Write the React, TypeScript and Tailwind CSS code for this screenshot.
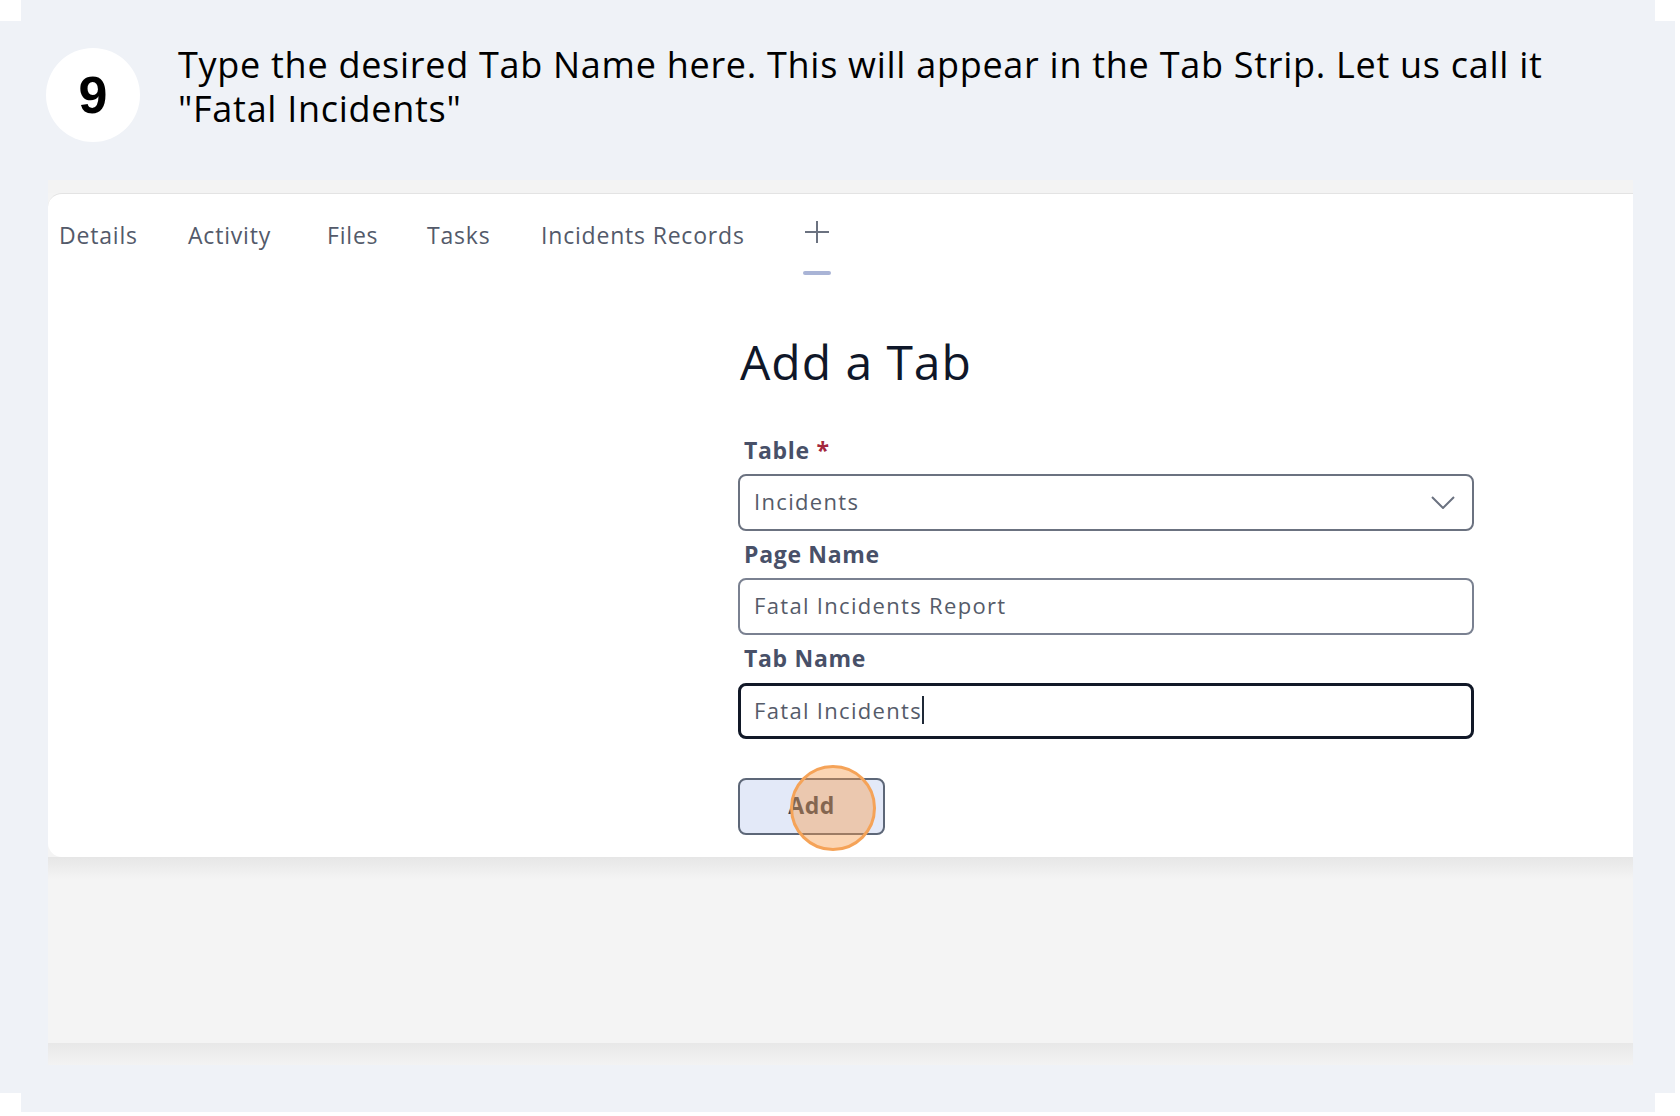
import React from "react";

const ui = { fontFamily: '"Open Sans", "Noto Sans", sans-serif' };

function Tab({ label, w }: { label: string; w: string }) {
  return (
    <div className={`${w} pt-[26px] text-[23px] leading-[31px] text-[#535a6a] tracking-[0.035em]`}>{label}</div>
  );
}

export default function App() {
  return (
    <div className="w-[1680px] h-[1116px] bg-white overflow-hidden" style={ui}>
      <div className="w-[1675px] h-[1112px] bg-[#eff2f7] flex flex-col [clip-path:polygon(21px_0,1655px_0,1655px_21px,1675px_21px,1675px_1093px,1655px_1093px,1655px_1112px,21px_1112px,21px_1093px,0_1093px,0_21px,21px_21px)]">
        {/* header */}
        <div className="flex items-start pt-[43px] pl-[46px] h-[180px]">
          <div className="mt-[5px] w-[94px] h-[94px] rounded-full bg-white flex items-center justify-center shrink-0">
            <span className="text-[52px] leading-none font-black text-black" style={{ fontFamily: '"Liberation Sans", Arial, sans-serif' }}>9</span>
          </div>
          <div className="ml-[38px] w-[1400px] text-[36px] leading-[44px] text-black tracking-[0.02em]">
            Type the desired Tab Name here. This will appear in the Tab Strip. Let us call it "Fatal Incidents"
          </div>
        </div>

        {/* screenshot */}
        <div className="ml-[48px] w-[1585px] h-[885px] bg-[#f4f4f4] flex flex-col">
          <div className="h-[13px] bg-[#f3f3f3]" />
          <div className="h-[664px] bg-white rounded-tl-[14px] rounded-bl-[14px] border-t border-[#e3e3e3] flex flex-col">
            {/* tabs */}
            <div className="flex items-start pl-[11px] h-[86px]">
              <Tab label="Details" w="w-[129px]" />
              <Tab label="Activity" w="w-[139px]" />
              <Tab label="Files" w="w-[100px]" />
              <Tab label="Tasks" w="w-[114px]" />
              <Tab label="Incidents Records" w="w-[262px]" />
              <div className="w-[28px] flex flex-col items-center">
                <svg className="mt-[27px]" width="24" height="22" viewBox="0 0 24 22">
                  <line x1="12" y1="0" x2="12" y2="22" stroke="#6b7280" strokeWidth="2" />
                  <line x1="0" y1="11" x2="24" y2="11" stroke="#6b7280" strokeWidth="2" />
                </svg>
                <div className="mt-[28px] w-[28px] h-[4px] bg-[#a9b4d6] rounded-full" />
              </div>
            </div>

            {/* form */}
            <div className="ml-[690px] w-[736px] flex flex-col">
              <h1 className="mt-[58px] ml-[2px] text-[48px] leading-[47px] font-normal text-[#0f1729] tracking-[0.02em]">Add a Tab</h1>

              <div className="mt-[51px] ml-[6px] text-[23px] leading-[28px] font-bold text-[#485068] tracking-[0.03em]">
                Table <span className="text-[#a3283d]">*</span>
              </div>
              <div className="mt-[10px] h-[57px] rounded-[8px] border-2 border-[#6b7280] flex items-center justify-between pl-[14px] pr-[17px]">
                <span className="text-[22px] leading-[30px] -mt-[3px] text-[#555b69] tracking-[0.06em]">Incidents</span>
                <svg width="24" height="13" viewBox="0 0 24 13">
                  <polyline points="1,1 12,12 23,1" fill="none" stroke="#6b7280" strokeWidth="2" />
                </svg>
              </div>

              <div className="mt-[9px] ml-[6px] text-[23px] leading-[28px] font-bold text-[#485068] tracking-[0.03em]">Page Name</div>
              <div className="mt-[10px] h-[57px] rounded-[8px] border-2 border-[#7a8191] flex items-center pl-[14px]">
                <span className="text-[22px] leading-[30px] -mt-[3px] text-[#555b69] tracking-[0.06em]">Fatal Incidents Report</span>
              </div>

              <div className="mt-[9px] ml-[6px] text-[23px] leading-[28px] font-bold text-[#485068] tracking-[0.03em]">Tab Name</div>
              <div className="mt-[11px] h-[56px] rounded-[8px] border-[3px] border-[#111827] flex items-center pl-[13px]">
                <span className="text-[22px] leading-[30px] -mt-[3px] text-[#555b69] tracking-[0.06em]">Fatal Incidents</span>
                <span className="w-[2px] h-[28px] -mt-[2px] bg-[#1f2937]" />
              </div>

              <div className="mt-[39px] relative w-[147px] h-[57px]">
                <div className="w-full h-full rounded-[8px] border-2 border-[#5d6778] bg-[#e3e9f8] flex items-center justify-center">
                  <span className="text-[23px] -mt-[2px] font-bold text-[#334155] tracking-[0.02em]">Add</span>
                </div>
                <div className="absolute left-[52px] top-[-13px] w-[86px] h-[86px] rounded-full border-[3px] border-[#f5a358] bg-[rgba(245,155,75,0.42)]" />
              </div>
            </div>
          </div>
          <div className="flex-1 bg-[linear-gradient(#e6e6e6,#f4f4f4_22px)]" />
          <div className="h-[22px] bg-[linear-gradient(#e8e8e8,#f3f3f3)]" />
        </div>
      </div>
    </div>
  );
}
